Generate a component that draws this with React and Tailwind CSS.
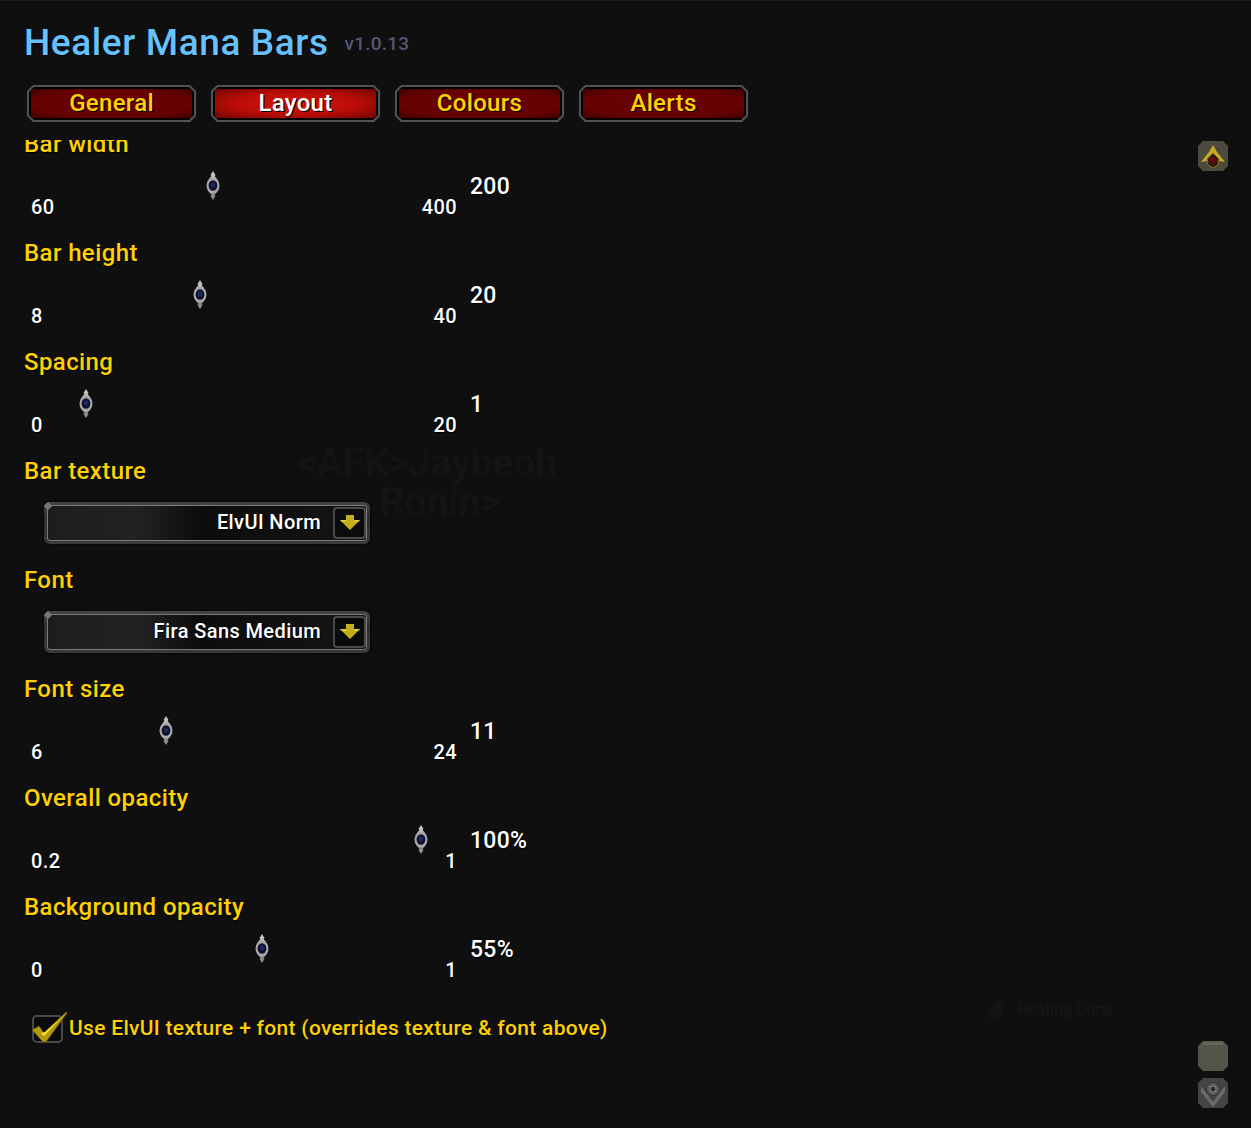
const F = '[font-family:"Roboto","Noto_Sans",sans-serif]';

function Thumb({ left }) {
  return (
    <svg className="absolute top-[12px]" style={{ left }} width="14" height="29" viewBox="0 0 14 29">
      <path d="M7 0 L9.5 4 L8.5 5 L11 8 L3 8 L5.5 5 L4.5 4 Z" fill="#c4c4c4" />
      <path d="M7 29 L9.5 25 L8.5 24 L11 21 L3 21 L5.5 24 L4.5 25 Z" fill="#8d8d8d" />
      <ellipse cx="7" cy="14.5" rx="6.5" ry="8" fill="#a8a8ad" />
      <ellipse cx="7" cy="14.5" rx="4.4" ry="5.2" fill="#10122c" />
      <circle cx="7" cy="14" r="2.4" fill="#1f2a5c" />
    </svg>
  );
}

function Label({ children }) {
  return (
    <div className="h-[30px] pl-[24px] text-[24px] leading-[31px] font-medium tracking-[0.4px] text-[#ffd100] [text-shadow:1px_1px_0_#000]">
      {children}
    </div>
  );
}

function SliderRow({ label, min, max, value, frac }) {
  return (
    <div className="h-[109px] shrink-0">
      <Label>{label}</Label>
      <div className="flex">
        <div className="relative ml-[31px] flex h-[79px] w-[426px] items-start justify-between pt-[36px] text-[20px] leading-[24px] font-medium tracking-[0.4px] text-white [text-shadow:1px_1px_0_#000]">
          <span>{min}</span>
          <span>{max}</span>
          <Thumb left={30 + 353 * frac} />
        </div>
        <div className="ml-[13px] pt-[14px] text-[23px] leading-[28px] font-medium tracking-[0.3px] text-white [text-shadow:1px_1px_0_#000]">
          {value}
        </div>
      </div>
    </div>
  );
}

function DropdownRow({ label, value }) {
  return (
    <div className="h-[109px] shrink-0">
      <Label>{label}</Label>
      <div className="relative mt-[16px] ml-[44px] h-[42px] w-[326px] rounded-[6px] bg-[linear-gradient(180deg,#454545,#2e2e2e_40%,#3a3a3a)] p-[3px] shadow-[0_0_3px_#000]">
        <div className="absolute top-[1px] left-[1px] h-[6px] w-[6px] rotate-45 bg-[#777]"></div>
        <div className="flex h-full items-center justify-end rounded-[3px] border border-[#7a7a7a] bg-[linear-gradient(90deg,#1d1d1d_0%,#222_28%,#0c0c0c_48%,#151515_100%)]">
          <span className="mr-[12px] pb-[2px] text-[20px] leading-[26px] font-medium tracking-[0.4px] text-white [text-shadow:1px_1px_0_#000]">
            {value}
          </span>
          <div className="flex h-[32px] w-[33px] items-center justify-center rounded-[4px] border-2 border-[#4a4a4a] bg-[#0b0b0b]">
            <svg width="20" height="16" viewBox="0 0 20 16">
              <path d="M6 0 H14 V5 H20 L10 15 L0 5 H6 Z" fill="#c4ad1c" />
              <path d="M0 5 H6 V7 H2 Z M14 5 H20 L18 7 H14 Z" fill="#e2ca30" />
            </svg>
          </div>
        </div>
      </div>
    </div>
  );
}

function Tab({ children, active }) {
  return (
    <div className="h-[37px] w-[169px] bg-[#525252] p-[2px] [clip-path:polygon(6px_0,calc(100%-6px)_0,100%_6px,100%_calc(100%-6px),calc(100%-6px)_100%,6px_100%,0_calc(100%-6px),0_6px)]">
      <div className="h-full w-full bg-black p-[2px] [clip-path:polygon(5px_0,calc(100%-5px)_0,100%_5px,100%_calc(100%-5px),calc(100%-5px)_100%,5px_100%,0_calc(100%-5px),0_5px)]">
        <div
          className={
            active
              ? "flex h-full w-full items-center justify-center rounded-[3px] bg-[radial-gradient(ellipse_at_center,#d81208_0%,#b80d06_55%,#6f0402_100%)] pb-[2px] text-[24px] font-medium tracking-[0.3px] text-white [text-shadow:1px_1px_0_#000]"
              : "flex h-full w-full items-center justify-center rounded-[3px] bg-[radial-gradient(ellipse_at_center,#6d0202_0%,#650101_70%,#3d0000_100%)] pb-[2px] text-[24px] font-medium tracking-[0.3px] text-[#ffd100] [text-shadow:1px_1px_0_#000]"
          }
        >
          {children}
        </div>
      </div>
    </div>
  );
}

function GoldIcon() {
  return (
    <svg width="30" height="30" viewBox="0 0 30 30">
      <path d="M5 0 H25 L30 5 V25 L25 30 H5 L0 25 V5 Z" fill="#4c4a3c" />
      <path d="M15 4 L19 11 L27 21 L21 20 L15 14 L9 20 L3 21 L11 11 Z" fill="#c9a91f" />
      <path d="M15 12 L21 18 L20 24 L15 27 L10 24 L9 18 Z" fill="#2a1c08" stroke="#8a7420" />
      <circle cx="15" cy="19" r="3.6" fill="#5c0c0c" />
    </svg>
  );
}

function GrayIcon() {
  return (
    <svg width="30" height="30" viewBox="0 0 30 30">
      <path d="M5 0 H25 L30 5 V25 L25 30 H5 L0 25 V5 Z" fill="#55544a" />
      <path d="M5 1 H24 L26 4 H6 Z" fill="#66655a" />
    </svg>
  );
}

function SteelIcon() {
  return (
    <svg width="30" height="30" viewBox="0 0 30 30">
      <path d="M5 0 H25 L30 5 V25 L25 30 H5 L0 25 V5 Z" fill="#444" />
      <path d="M3 8 L15 24 L27 8 L27 14 L15 29 L3 14 Z" fill="#6b6b6b" />
      <circle cx="15" cy="11" r="6.5" fill="#5c5c5c" stroke="#333" />
      <circle cx="15" cy="11" r="3" fill="#2a2a2a" stroke="#8a8a8a" />
    </svg>
  );
}

export default function App() {
  return (
    <div className={`relative flex h-[1128px] w-[1251px] overflow-hidden border-t border-[#1d1d1d] bg-[#0f0f0f] ${F}`}>
      <div className="absolute top-[438px] left-[297px] text-[39px] leading-[48px] font-medium text-[#141414]">
        &lt;AFK&gt;Jaybeoh
      </div>
      <div className="absolute top-[477px] left-[380px] text-[39px] leading-[48px] font-medium text-[#141414]">
        Ronin&gt;
      </div>
      <svg className="absolute top-[998px] left-[985px]" width="22" height="22" viewBox="0 0 22 22">
        <path d="M14 1 L20 3 L17 14 L10 21 L2 18 L5 8 Z" fill="#141414" />
      </svg>
      <div className="absolute top-[998px] left-[1017px] text-[16px] leading-[22px] font-bold text-[#151515]">
        Healing Done
      </div>

      <div className="relative flex w-[1243px] flex-col border-r border-[#0a0a0a]">
        <div className="flex h-[84px] items-start pt-[18px] pl-[24px]">
          <span className="text-[37px] leading-[48px] font-medium tracking-[0.6px] text-[#66c2ff] [text-shadow:1px_1px_0_#000]">
            Healer Mana Bars
          </span>
          <span className="mt-[12px] ml-[16px] text-[19px] leading-[26px] font-medium tracking-[0.2px] text-[#565670]">v1.0.13</span>
        </div>
        <div className="ml-[27px] flex gap-[15px]">
          <Tab>General</Tab>
          <Tab active>Layout</Tab>
          <Tab>Colours</Tab>
          <Tab>Alerts</Tab>
        </div>
        <div className="mt-[18px] flex h-[987px] flex-col overflow-hidden">
          <div className="-mt-[11px]">
            <SliderRow label="Bar width" min="60" max="400" value="200" frac={0.41} />
            <SliderRow label="Bar height" min="8" max="40" value="20" frac={0.375} />
            <SliderRow label="Spacing" min="0" max="20" value="1" frac={0.05} />
            <DropdownRow label="Bar texture" value="ElvUI Norm" />
            <DropdownRow label="Font" value="Fira Sans Medium" />
            <SliderRow label="Font size" min="6" max="24" value="11" frac={0.278} />
            <SliderRow label="Overall opacity" min="0.2" max="1" value="100%" frac={1} />
            <SliderRow label="Background opacity" min="0" max="1" value="55%" frac={0.55} />
            <div className="mt-[13px] flex items-center pl-[32px]">
              <div className="relative h-[28px] w-[31px] rounded-[5px] border-2 border-[#4a4a4a] bg-[#0a0a0a]">
                <svg className="absolute -top-[6px] -left-[3px]" width="38" height="34" viewBox="0 0 38 34">
                  <path d="M1 19 L8 15 L13 22 L35 1 L36 2 L15 31 L12 31 Z" fill="#b29a10" stroke="#5f4f06" strokeWidth="0.8" />
                  <path d="M10 22 L13 25 L33 4 L14 21 Z" fill="#ffe22a" />
                </svg>
              </div>
              <span className="ml-[6px] pb-[2px] text-[21px] leading-[28px] font-medium tracking-[0.3px] text-[#ffd100] [text-shadow:1px_1px_0_#000]">
                Use ElvUI texture + font (overrides texture &amp; font above)
              </span>
            </div>
          </div>
        </div>
      </div>

      <div className="relative -ml-[45px] flex h-[1107px] w-[30px] flex-col pt-[140px]">
        <GoldIcon />
        <div className="mt-auto flex flex-col gap-[7px]">
          <GrayIcon />
          <SteelIcon />
        </div>
      </div>
    </div>
  );
}
